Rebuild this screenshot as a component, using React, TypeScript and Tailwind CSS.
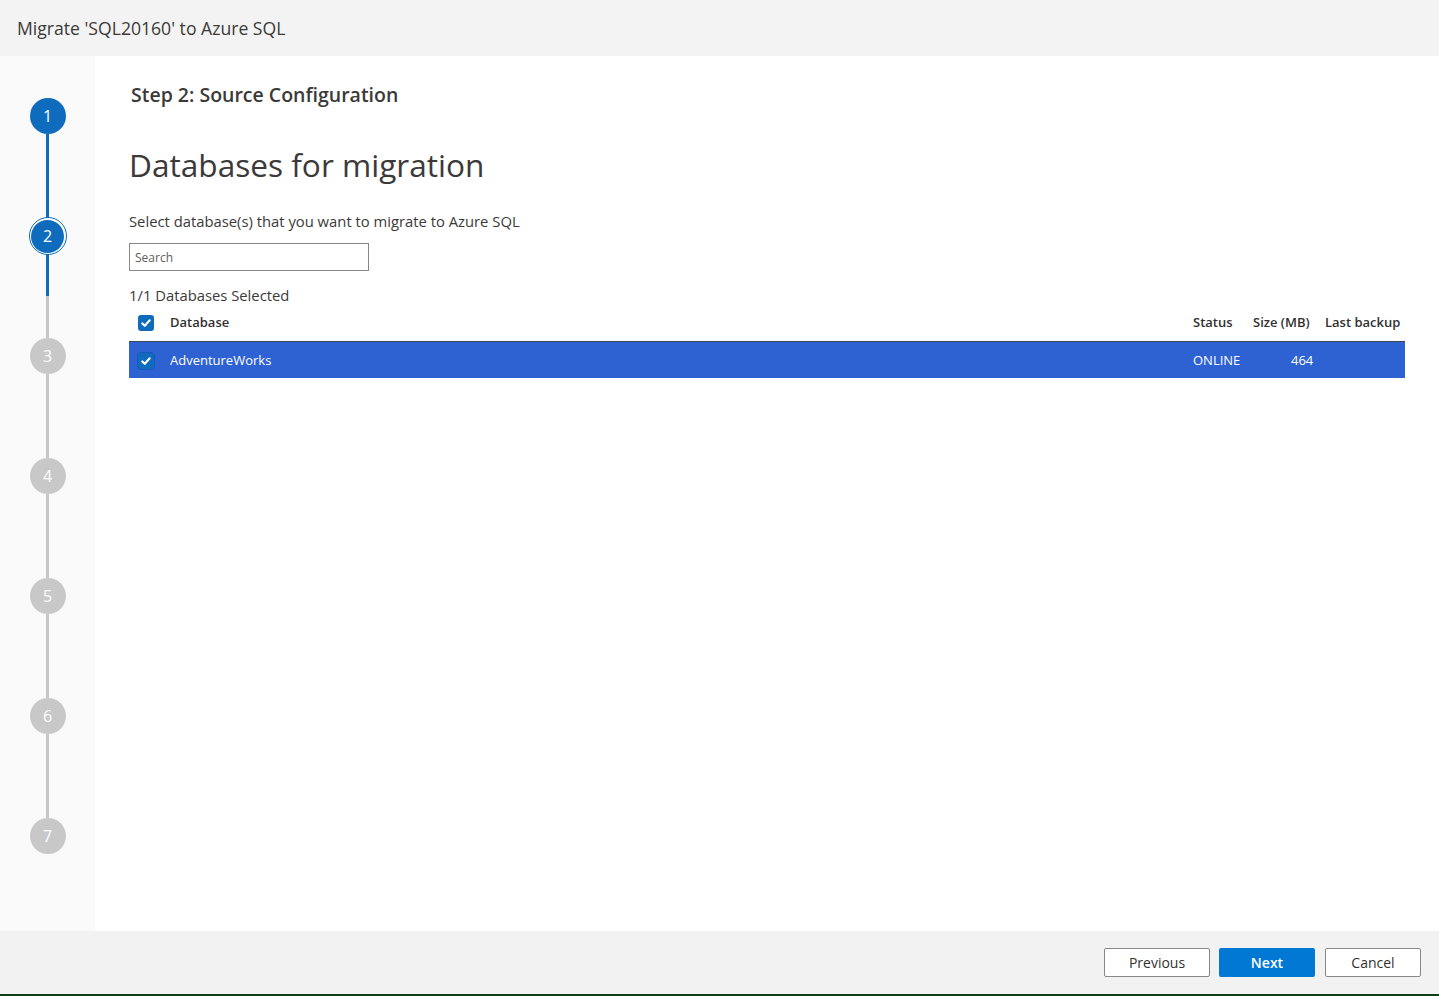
import React from "react";

const font = { fontFamily: '"Open Sans", "Noto Sans", sans-serif' };

function Check({ onBlue }: { onBlue?: boolean }) {
  return (
    <div
      className={
        "w-[16px] h-[16px] rounded-[3px] bg-[#0f6cbd] flex items-center justify-center " +
        (onBlue ? "outline outline-1 outline-[#1a56c0]" : "")
      }
    >
      <svg width="12" height="12" viewBox="0 0 12 12" fill="none">
        <path d="M2.3 6.4 L4.8 8.8 L9.7 3.3" stroke="white" strokeWidth="2.1" strokeLinecap="round" strokeLinejoin="round" />
      </svg>
    </div>
  );
}

function Circle({ n, state }: { n: number; state: "done" | "current" | "todo" }) {
  if (state === "current") {
    return (
      <div className="w-[38px] h-[38px] -my-[1px] rounded-full border border-[#0f6cbd] bg-white p-[1.5px] flex">
        <div className="flex-1 rounded-full bg-[#0f6cbd] text-white flex items-center justify-center text-[16px]">{n}</div>
      </div>
    );
  }
  return (
    <div
      className={
        "w-[36px] h-[36px] rounded-full flex items-center justify-center text-[16px] text-white " +
        (state === "done" ? "bg-[#0f6cbd]" : "bg-[#c8c8c8]")
      }
    >
      {n}
    </div>
  );
}

export default function App() {
  const steps = [1, 2, 3, 4, 5, 6, 7];
  return (
    <div className="w-[1439px] h-[996px] flex flex-col bg-white text-[#323130]" style={font}>
      <div className="h-[56px] bg-[#f3f3f3] flex items-center px-[17px] text-[17.6px] text-[#3b3a39]">
        Migrate 'SQL20160' to Azure SQL
      </div>
      <div className="flex-1 flex min-h-0">
        <div className="w-[95px] bg-[#fafafa] flex flex-col items-center pt-[42px]">
          {steps.map((s, i) => (
            <React.Fragment key={s}>
              <Circle n={s} state={s === 1 ? "done" : s === 2 ? "current" : "todo"} />
              {i < steps.length - 1 && (
                <div className="w-[3px] h-[84px] flex flex-col">
                  {s === 1 && <div className="flex-1 bg-[#0f6cbd]" />}
                  {s === 2 && (
                    <>
                      <div className="h-[42px] bg-[#0f6cbd]" />
                      <div className="flex-1 bg-[#c8c8c8]" />
                    </>
                  )}
                  {s > 2 && <div className="flex-1 bg-[#c8c8c8]" />}
                </div>
              )}
            </React.Fragment>
          ))}
        </div>
        <div className="flex-1 pl-[34px] pr-[34px] pt-[24px]">
          <div className="pl-[2px] text-[19.5px] font-semibold text-[#3b3a39] leading-[30px]">Step 2: Source Configuration</div>
          <div className="mt-[33px] text-[31.6px] leading-[44px] text-[#3b3a39]">Databases for migration</div>
          <div className="mt-[24px] text-[14.8px] leading-[20px] text-[#3b3a39]">
            Select database(s) that you want to migrate to Azure SQL
          </div>
          <div className="mt-[12px] w-[240px] h-[28px] border border-[#8a8886] flex items-center px-[5px] pt-[2px] text-[12px] text-[#605e5c]">
            Search
          </div>
          <div className="mt-[14px] text-[14.8px] leading-[20px] text-[#3b3a39]">1/1 Databases Selected</div>
          <div className="w-[1276px]">
            <div className="h-[36px] flex items-center text-[13px] font-semibold text-[#323130]">
              <div className="w-[41px] pl-[9px]">
                <Check />
              </div>
              <div className="flex-1">Database</div>
              <div className="w-[60px]">Status</div>
              <div className="w-[72px]">Size (MB)</div>
              <div className="w-[80px]">Last backup</div>
            </div>
            <div className="h-[37px] bg-[#2e62d3] border-t border-[#404552] flex items-center pt-[1px] text-[13px] text-white">
              <div className="w-[41px] pl-[9px]">
                <Check onBlue />
              </div>
              <div className="flex-1">AdventureWorks</div>
              <div className="w-[60px]">ONLINE</div>
              <div className="w-[72px] pl-[38px]">464</div>
              <div className="w-[80px]" />
            </div>
          </div>
        </div>
      </div>
      <div className="h-[65px] bg-[#f2f2f2] border-b-2 border-[#0e3d1a] flex items-center justify-end pr-[18px] gap-[9px] text-[14px]">
        <button className="w-[106px] h-[29px] bg-white border border-[#8a8886] rounded-[2px] text-[#323130]">Previous</button>
        <button className="w-[96px] h-[29px] bg-[#0078d4] rounded-[2px] text-white font-semibold ml-[0px]">Next</button>
        <button className="w-[96px] h-[29px] bg-white border border-[#8a8886] rounded-[2px] text-[#323130] ml-[1px]">Cancel</button>
      </div>
    </div>
  );
}
